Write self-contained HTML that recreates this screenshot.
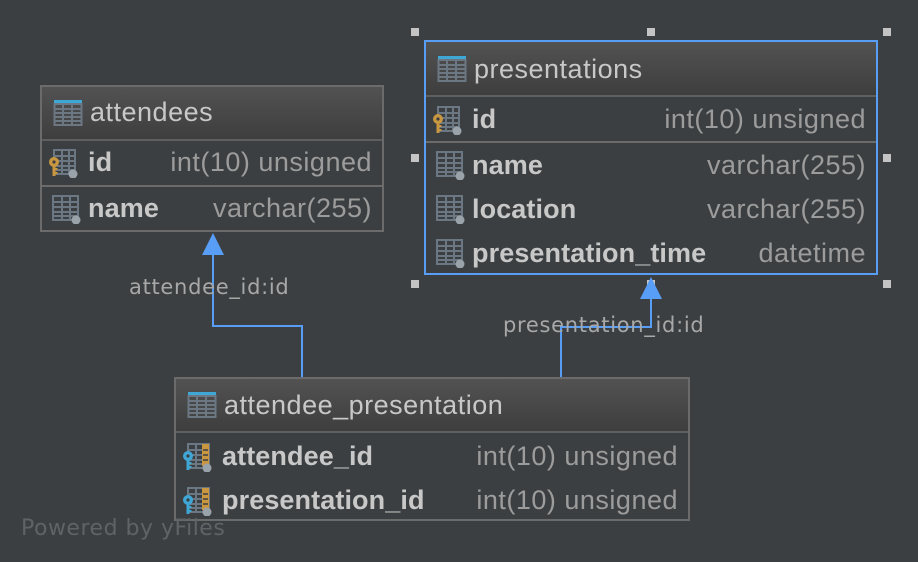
<!DOCTYPE html>
<html><head><meta charset="utf-8"><style>
body{margin:0;width:918px;height:562px;background:#3c3f41;position:relative;overflow:hidden;font-family:"Liberation Sans",sans-serif;}
.t{position:absolute;border:2px solid #6b6b6b;box-sizing:border-box;background:#3c3f41}
.h{position:absolute;left:0;right:0;top:0;background:linear-gradient(#525252,#3e3e3e);border-bottom:2px solid #5f5f5f}
.r{position:absolute;left:0;right:0;}
.sep{border-bottom:2px solid #6b6b6b}
.n{position:absolute;color:#c8c8c8;font-size:27px;font-weight:bold;white-space:nowrap;letter-spacing:0.1px}
.ht{position:absolute;color:#c8c8c8;font-size:27px;white-space:nowrap;letter-spacing:0.5px}
.ty{position:absolute;color:#9c9c9c;font-size:27px;white-space:nowrap;letter-spacing:0.5px;text-align:right}
svg.i{position:absolute;width:30px;height:30px}
.hd{position:absolute;width:8px;height:8px;background:#c4c4c4}
.lb{position:absolute;color:#a8a8a8;font-family:"DejaVu Sans",sans-serif;font-size:21px;white-space:nowrap;letter-spacing:0.7px}
</style></head><body>
<svg width="0" height="0" style="position:absolute">
<defs>
<symbol id="tb" viewBox="0 0 30 30"><rect x="1" y="2" width="28" height="4" fill="#3fa7d6"/><rect x="1.5" y="6" width="27" height="21" fill="none" stroke="#6b7883" stroke-width="2"/><path d="M10 6v21M19 6v21M2 11h26M2 15h26M2 19h26M2 23h26" stroke="#6b7883" stroke-width="2"/></symbol>
<symbol id="col" viewBox="0 0 30 30"><rect x="2" y="2" width="25" height="24" fill="none" stroke="#6b7883" stroke-width="2"/><path d="M11 2v24M19 2v24M3 8h23M3 13h23M3 18h23M3 22h23" stroke="#6b7883" stroke-width="2"/><circle cx="25" cy="26" r="4.5" fill="#9aa3a9"/></symbol>
<symbol id="pk" viewBox="0 0 30 30"><rect x="6" y="2" width="21" height="24" fill="none" stroke="#6b7883" stroke-width="2"/><path d="M14 2v24M21 2v24M7 8h19M7 13h19M7 18h19M7 22h19" stroke="#6b7883" stroke-width="2"/><circle cx="25" cy="26" r="4.5" fill="#9aa3a9"/><circle cx="6" cy="14" r="5" fill="#c9973f"/><circle cx="6" cy="14" r="1.6" fill="#3c3f41"/><path d="M4.5 18v10h3v-2h2v-2h-2v-2h2v-2h-2v-2z" fill="#c9973f"/></symbol>
<symbol id="fk" viewBox="0 0 30 30"><rect x="6" y="2" width="21" height="24" fill="none" stroke="#6b7883" stroke-width="2"/><path d="M14 2v24M7 8h19M7 13h19M7 18h19M7 22h19" stroke="#6b7883" stroke-width="2"/><rect x="20" y="2" width="7" height="22" fill="#c9973f"/><path d="M21 8h5M21 13h5M21 18h5" stroke="#3c3f41" stroke-width="1.5"/><circle cx="25" cy="26" r="4.5" fill="#9aa3a9"/><circle cx="6" cy="14" r="5" fill="#3fa7d6"/><circle cx="6" cy="14" r="1.6" fill="#3c3f41"/><path d="M4.5 18v10h3v-2h2v-2h-2v-2h2v-2h-2v-2z" fill="#3fa7d6"/></symbol>
</defs></svg>

<div class="hd" style="left:411px;top:28px"></div>
<div class="hd" style="left:647px;top:28px"></div>
<div class="hd" style="left:883px;top:28px"></div>
<div class="hd" style="left:411px;top:154px"></div>
<div class="hd" style="left:883px;top:154px"></div>
<div class="hd" style="left:411px;top:280px"></div>
<div class="hd" style="left:647px;top:280px"></div>
<div class="hd" style="left:883px;top:280px"></div>

<svg style="position:absolute;left:0;top:0" width="918" height="562">
<path d="M213 250V326H302V377" fill="none" stroke="#589df6" stroke-width="2"/>
<polygon points="213,233 202,255 224,255" fill="#589df6"/>
<path d="M651 295V327H561V377" fill="none" stroke="#589df6" stroke-width="2"/>
<polygon points="651,277 640,299 662,299" fill="#589df6"/>
</svg>
<div class="lb" style="left:129px;top:275px">attendee_id:id</div>
<div class="lb" style="left:503px;top:313px">presentation_id:id</div>

<div class="t" style="left:40px;top:85px;width:344px;height:147px">
 <div class="h" style="height:52px"></div>
 <svg class="i" style="left:11px;top:11px"><use href="#tb"/></svg>
 <div class="ht" style="left:48px;top:10px">attendees</div>
 <div class="r sep" style="top:52px;height:46px"></div>
 <svg class="i" style="left:6px;top:61px"><use href="#pk"/></svg>
 <div class="n" style="left:46px;top:60px">id</div>
 <div class="ty" style="right:10px;top:60px">int(10) unsigned</div>
 <svg class="i" style="left:9px;top:107px"><use href="#col"/></svg>
 <div class="n" style="left:46px;top:106px">name</div>
 <div class="ty" style="right:10px;top:106px">varchar(255)</div>
</div>

<div class="t" style="left:424px;top:40px;width:454px;height:235px;border-color:#589df6">
 <div class="h" style="height:53px"></div>
 <svg class="i" style="left:11px;top:12px"><use href="#tb"/></svg>
 <div class="ht" style="left:48px;top:12px">presentations</div>
 <div class="r sep" style="top:53px;height:46px"></div>
 <svg class="i" style="left:6px;top:63px"><use href="#pk"/></svg>
 <div class="n" style="left:46px;top:62px">id</div>
 <div class="ty" style="right:10px;top:62px">int(10) unsigned</div>
 <svg class="i" style="left:9px;top:108px"><use href="#col"/></svg>
 <div class="n" style="left:46px;top:108px">name</div>
 <div class="ty" style="right:10px;top:108px">varchar(255)</div>
 <svg class="i" style="left:9px;top:152px"><use href="#col"/></svg>
 <div class="n" style="left:46px;top:152px">location</div>
 <div class="ty" style="right:10px;top:152px">varchar(255)</div>
 <svg class="i" style="left:9px;top:196px"><use href="#col"/></svg>
 <div class="n" style="left:46px;top:196px">presentation_time</div>
 <div class="ty" style="right:10px;top:196px">datetime</div>
</div>

<div class="t" style="left:174px;top:377px;width:516px;height:144px">
 <div class="h" style="height:52px"></div>
 <svg class="i" style="left:11px;top:11px"><use href="#tb"/></svg>
 <div class="ht" style="left:48px;top:11px">attendee_presentation</div>
 <svg class="i" style="left:6px;top:63px"><use href="#fk"/></svg>
 <div class="n" style="left:46px;top:62px">attendee_id</div>
 <div class="ty" style="right:10px;top:62px">int(10) unsigned</div>
 <svg class="i" style="left:6px;top:107px"><use href="#fk"/></svg>
 <div class="n" style="left:46px;top:106px">presentation_id</div>
 <div class="ty" style="right:10px;top:106px">int(10) unsigned</div>
</div>

<div class="lb" style="left:21px;top:516px;color:#5f6366;font-size:22px;letter-spacing:0.5px">Powered by yFiles</div>
</body></html>
